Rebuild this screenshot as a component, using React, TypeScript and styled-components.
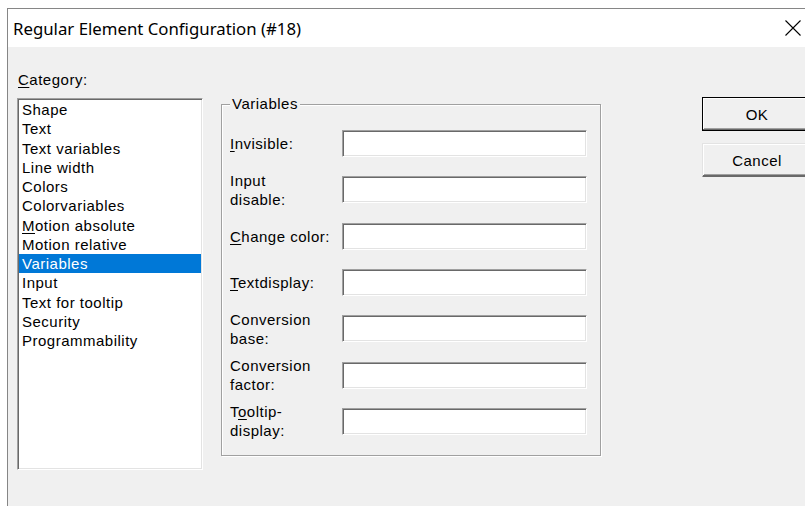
import React from 'react'
import styled, { createGlobalStyle } from 'styled-components'

const GlobalStyle = createGlobalStyle`
  html, body {
    margin: 0;
    padding: 0;
    background: #ffffff;
    overflow: hidden;
    width: 805px;
    height: 506px;
  }
`

const Window = styled.div`
  margin: 8px 0 0 7px;
  width: 819px;
  height: 520px;
  border-left: 1px solid #868686;
  border-top: 1px solid #868686;
  background: #f0f0f0;
  display: flex;
  flex-direction: column;
  font-family: 'Liberation Sans', Arial, sans-serif;
  font-size: 15px;
  letter-spacing: 0.5px;
  color: #000;
`

const TitleBar = styled.div`
  height: 38px;
  background: #ffffff;
  display: flex;
  align-items: center;
  padding-left: 5px;
  font-family: 'Noto Sans', 'Segoe UI', sans-serif;
  font-size: 16.8px;
  letter-spacing: 0;
`

const CloseButton = styled.div`
  margin-left: auto;
  width: 69px;
  height: 38px;
  display: flex;
  align-items: center;
  justify-content: center;
`

const Body = styled.div`
  display: flex;
  align-items: flex-start;
  padding: 23px 0 0 9px;
`

const CategoryColumn = styled.div`
  display: flex;
  flex-direction: column;
  width: 186px;
`

const Caption = styled.div`
  line-height: 20px;
  padding-left: 1px;
`

const Key = styled.span`
  text-decoration: underline;
  text-underline-offset: 2px;
  text-decoration-thickness: 1px;
`

const ListBox = styled.div`
  margin-top: 8px;
  height: 372px;
  box-sizing: border-box;
  background: #ffffff;
  border-style: solid;
  border-width: 1px;
  border-color: #a0a0a0 #ffffff #ffffff #a0a0a0;
  box-shadow: inset 1px 1px 0 #696969, inset -1px -1px 0 #e3e3e3;
  padding: 1px;
`

const ListItem = styled.div<{ $selected?: boolean }>`
  height: 19.25px;
  line-height: 19.25px;
  padding-left: 3px;
  white-space: nowrap;
  background: ${(p) => (p.$selected ? '#0078d7' : 'transparent')};
  color: ${(p) => (p.$selected ? '#ffffff' : '#000000')};
`

const GroupBox = styled.fieldset`
  margin: 24px 0 0 18px;
  padding: 0;
  width: 379px;
  box-sizing: border-box;
  border: 1px solid #a0a0a0;
  box-shadow: inset 1px 1px 0 #ffffff, 1px 1px 0 #ffffff;
`

const GroupLegend = styled.legend`
  margin-left: 8px;
  padding: 0 2px;
  line-height: 20px;
  background: #f0f0f0;
`

const FieldGrid = styled.div`
  display: grid;
  grid-template-columns: 112px 245px;
  grid-auto-rows: 27px;
  row-gap: 19.33px;
  padding: 16px 13px 20px 8px;
  align-items: center;
`

const FieldLabel = styled.label`
  line-height: 19px;
  white-space: nowrap;
`

const TextBox = styled.div`
  height: 27px;
  box-sizing: border-box;
  background: #ffffff;
  border-style: solid;
  border-width: 1px;
  border-color: #a0a0a0 #ffffff #ffffff #a0a0a0;
  box-shadow: inset 1px 1px 0 #696969, inset -1px -1px 0 #e3e3e3;
`

const ButtonColumn = styled.div`
  display: flex;
  flex-direction: column;
  gap: 12px;
  margin: 27px 0 0 101px;
`

const Button = styled.div<{ $default?: boolean }>`
  width: 110px;
  height: 34px;
  box-sizing: border-box;
  display: flex;
  align-items: center;
  justify-content: center;
  background: #f0f0f0;
  border: 1px solid ${(p) => (p.$default ? '#000000' : '#e3e3e3')};
  border-right-color: ${(p) => (p.$default ? '#000000' : '#696969')};
  border-bottom-color: ${(p) => (p.$default ? '#000000' : '#696969')};
  box-shadow: inset -1px -1px 0 #696969, inset 1px 1px 0 #ffffff, inset -2px -2px 0 #a0a0a0;
`

const categories: React.ReactNode[] = [
  'Shape',
  'Text',
  'Text variables',
  'Line width',
  'Colors',
  'Colorvariables',
  <>
    <Key>M</Key>otion absolute
  </>,
  'Motion relative',
  'Variables',
  'Input',
  'Text for tooltip',
  'Security',
  'Programmability',
]

const fields: React.ReactNode[] = [
  <>
    <Key>I</Key>nvisible:
  </>,
  <>
    Input
    <br />
    disable:
  </>,
  <>
    <Key>C</Key>hange color:
  </>,
  <>
    <Key>T</Key>extdisplay:
  </>,
  <>
    Conversion
    <br />
    base:
  </>,
  <>
    Conversion
    <br />
    factor:
  </>,
  <>
    T<Key>o</Key>oltip-
    <br />
    display:
  </>,
]

export default function App() {
  return (
    <>
      <GlobalStyle />
      <Window>
        <TitleBar>
          Regular Element Configuration (#18)
          <CloseButton>
            <svg width="16" height="16" viewBox="0 0 16 16">
              <path d="M0.5 0.5 L15.5 15.5 M15.5 0.5 L0.5 15.5" stroke="#000" strokeWidth="1.1" fill="none" />
            </svg>
          </CloseButton>
        </TitleBar>
        <Body>
          <CategoryColumn>
            <Caption>
              <Key>C</Key>ategory:
            </Caption>
            <ListBox>
              {categories.map((c, i) => (
                <ListItem key={i} $selected={i === 8}>
                  {c}
                </ListItem>
              ))}
            </ListBox>
          </CategoryColumn>
          <GroupBox>
            <GroupLegend>Variables</GroupLegend>
            <FieldGrid>
              {fields.map((f, i) => (
                <React.Fragment key={i}>
                  <FieldLabel>{f}</FieldLabel>
                  <TextBox />
                </React.Fragment>
              ))}
            </FieldGrid>
          </GroupBox>
          <ButtonColumn>
            <Button $default>OK</Button>
            <Button>Cancel</Button>
          </ButtonColumn>
        </Body>
      </Window>
    </>
  )
}
